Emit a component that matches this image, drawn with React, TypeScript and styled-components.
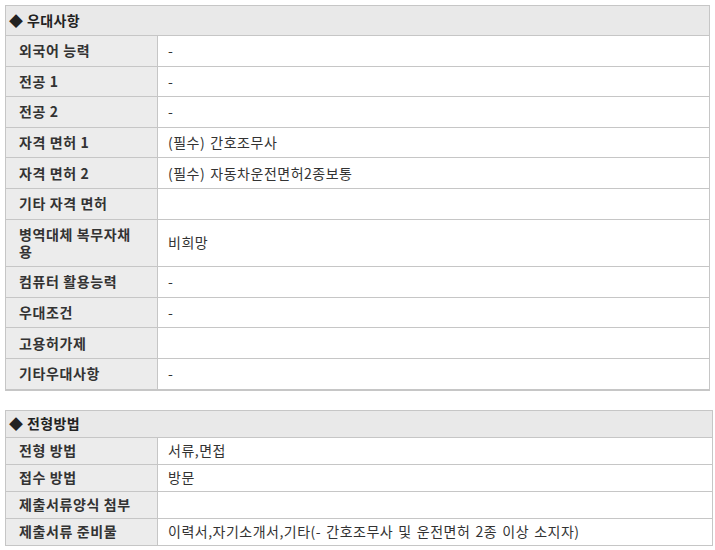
import styled, { createGlobalStyle } from "styled-components";

const GlobalStyle = createGlobalStyle`
  body {
    margin: 0;
    background: #ffffff;
    font-family: "Noto Sans CJK KR", "Noto Sans", sans-serif;
    font-size: 14px;
    color: #333333;
  }
`;

const Page = styled.div`
  padding: 5px 0 0 5px;
  display: flex;
  flex-direction: column;
  gap: 19px;
`;

const Panel = styled.div<{ $width: number; $thick?: boolean }>`
  width: ${(p) => p.$width}px;
  box-sizing: border-box;
  border: 1px solid #c6c6c6;
  border-bottom-width: ${(p) => (p.$thick ? 2 : 1)}px;
`;

const Header = styled.div<{ $pad: number }>`
  background: #e9e9e9;
  padding: ${(p) => p.$pad}px 3px;
  line-height: 17px;
  font-weight: 700;
  letter-spacing: 0.4px;
  color: #222222;
  border-bottom: 1px solid #c6c6c6;
`;

const Row = styled.div`
  display: grid;
  grid-template-columns: 152px 1fr;
  border-bottom: 1px solid #c6c6c6;
  &:last-child {
    border-bottom: none;
  }
`;

const Label = styled.div<{ $pad: number }>`
  box-sizing: border-box;
  background: #ececec;
  border-right: 1px solid #c6c6c6;
  padding: ${(p) => p.$pad}px 22px ${(p) => p.$pad}px 13px;
  line-height: 17px;
  font-weight: 700;
  letter-spacing: 0.6px;
  color: #333333;
  display: flex;
  align-items: center;
`;

const Value = styled.div<{ $pad: number }>`
  padding: ${(p) => p.$pad}px 10px;
  line-height: 17px;
  letter-spacing: 0.5px;
  word-spacing: 1.5px;
  color: #333333;
  display: flex;
  align-items: center;
`;

type Item = [string, string];

const benefits: Item[] = [
  ["외국어 능력", "-"],
  ["전공 1", "-"],
  ["전공 2", "-"],
  ["자격 면허 1", "(필수) 간호조무사"],
  ["자격 면허 2", "(필수) 자동차운전면허2종보통"],
  ["기타 자격 면허", ""],
  ["병역대체 복무자채용", "비희망"],
  ["컴퓨터 활용능력", "-"],
  ["우대조건", "-"],
  ["고용허가제", ""],
  ["기타우대사항", "-"],
];

const selection: Item[] = [
  ["전형 방법", "서류,면접"],
  ["접수 방법", "방문"],
  ["제출서류양식 첨부", ""],
  ["제출서류 준비물", "이력서,자기소개서,기타(- 간호조무사 및 운전면허 2종 이상 소지자)"],
];

const InfoTable = ({
  title,
  items,
  width,
  headPad,
  pad,
  thick,
}: {
  title: string;
  items: Item[];
  width: number;
  headPad: number;
  pad: number;
  thick?: boolean;
}) => (
  <Panel $width={width} $thick={thick}>
    <Header $pad={headPad}>◆ {title}</Header>
    {items.map(([label, value]) => (
      <Row key={label}>
        <Label $pad={pad}>{label}</Label>
        <Value $pad={pad}>{value}</Value>
      </Row>
    ))}
  </Panel>
);

export default function App() {
  return (
    <>
      <GlobalStyle />
      <Page>
        <InfoTable title="우대사항" items={benefits} width={705} headPad={6} pad={6.3} thick />
        <InfoTable title="전형방법" items={selection} width={708} headPad={4.5} pad={4.5} />
      </Page>
    </>
  );
}
